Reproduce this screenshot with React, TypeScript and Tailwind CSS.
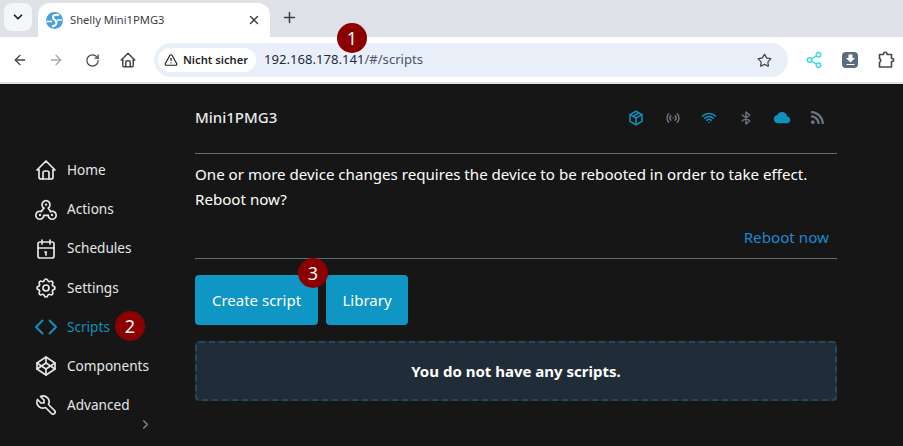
import React from 'react';
import { ArrowLeft, ArrowRight, ChevronDown, Plus, RotateCw, Share2, Star, TriangleAlert, X } from 'lucide-react';
import {
  TbAccessPoint,
  TbBluetooth,
  TbBrandCodepen,
  TbCalendar,
  TbChevronRight,
  TbCloudFilled,
  TbHome,
  TbPackage,
  TbSettings,
  TbTool,
  TbWifi,
} from 'react-icons/tb';
import { FaRss } from 'react-icons/fa';

function ActionsIcon({ className }: { className?: string }) {
  return (
    <svg width="24" height="24" viewBox="0 0 24 24" fill="none" stroke="currentColor" strokeWidth="1.7" strokeLinecap="round" strokeLinejoin="round" className={className}>
      <path d="M9.9 11.1 A4 4 0 1 1 14.1 11.1 L16.6 14.6" />
      <path d="M14.2 18.4 A4 4 0 1 0 16.6 14.6" />
      <path d="M14.2 18.4 H9.8 A4 4 0 1 1 7.4 14.6 L9.9 11.1" />
      <circle cx="12" cy="7.6" r="1.2" fill="currentColor" stroke="none" />
      <circle cx="6" cy="18" r="1.2" fill="currentColor" stroke="none" />
      <circle cx="18" cy="18" r="1.2" fill="currentColor" stroke="none" />
    </svg>
  );
}

function CodeIcon({ className }: { className?: string }) {
  return (
    <svg width="24" height="24" viewBox="0 0 24 24" fill="none" stroke="currentColor" strokeWidth="2" strokeLinecap="round" strokeLinejoin="round" className={className}>
      <path d="M8.5 5.5 L2 12 L8.5 18.5" />
      <path d="M15.5 5.5 L22 12 L15.5 18.5" />
    </svg>
  );
}

const navItems = [
  { label: 'Home', icon: TbHome },
  { label: 'Actions', icon: ActionsIcon },
  { label: 'Schedules', icon: TbCalendar },
  { label: 'Settings', icon: TbSettings },
  { label: 'Scripts', icon: CodeIcon, active: true },
  { label: 'Components', icon: TbBrandCodepen },
  { label: 'Advanced', icon: TbTool },
];

function Badge({ n, className }: { n: number; className: string }) {
  return (
    <span className={`absolute flex h-[30px] w-[30px] items-center justify-center rounded-full bg-[#8b0000] text-[18px] leading-none text-white ${className}`}>
      {n}
    </span>
  );
}

function ShellyLogo() {
  return (
    <svg width="17" height="17" viewBox="0 0 17 17" className="shrink-0">
      <circle cx="8.5" cy="8.5" r="8.5" fill="#4a9fe0" />
      <path d="M13 3 C9 2 6.5 3.5 7 6 C7.5 8 10.5 8 10.5 10.5 C10.5 12.5 8.5 14 6 14.5" fill="none" stroke="#fff" strokeWidth="2" />
      <path d="M0.5 9.5 H6" stroke="#fff" strokeWidth="1.6" />
      <path d="M11 8 H16" stroke="#fff" strokeWidth="1.4" />
    </svg>
  );
}

function ExtensionIcon() {
  return (
    <svg width="18" height="18" viewBox="0 0 18 18" fill="none" stroke="#474747" strokeWidth="1.6" strokeLinejoin="round" className="ml-[19px]">
      <path d="M2.5 3.5 H6.5 V3 a1.8 1.8 0 0 1 3.6 0 V3.5 H14.5 V7.5 H15.2 a1.5 1.5 0 0 1 0 3 H14.5 V16 H2.5 V11.5 a2.2 2.2 0 0 0 1.2-2 a2.2 2.2 0 0 0-1.2-2 Z" />
    </svg>
  );
}

function TabStrip() {
  return (
    <div className="flex h-[37px] items-end bg-[#dee1e6] pl-1">
      <div className="mb-[6px] flex h-[28px] w-[28px] items-center justify-center rounded-lg bg-[#f4f6f9]">
        <ChevronDown size={14} strokeWidth={3} className="text-[#1f1f1f]" />
      </div>
      <div className="ml-[6px] flex h-[34px] w-[232px] items-center rounded-t-xl bg-white pl-[8px] pr-[9px]">
        <ShellyLogo />
        <span className="ml-[7px] flex-1 text-[11.2px] text-[#3c4043]">Shelly Mini1PMG3</span>
        <X size={14} strokeWidth={2.5} className="text-[#3c4043]" />
      </div>
      <Plus size={17} strokeWidth={2.2} className="mb-[11px] ml-[11px] text-[#3c4043]" />
    </div>
  );
}

function Toolbar() {
  return (
    <div className="relative flex h-[47px] items-center border-b-2 border-[#e4e4e4] bg-white pt-[1px]">
      <div className="flex w-[154px] items-center pl-[12px] text-[#474747]">
        <ArrowLeft size={16} strokeWidth={2} />
        <ArrowRight size={16} strokeWidth={2} className="ml-[20px] text-[#a9a9a9]" />
        <RotateCw size={15} strokeWidth={2} className="ml-[21px]" />
        <TbHome size={18} strokeWidth={2} className="ml-[19px]" />
      </div>
      <div className="flex h-[34px] w-[634px] items-center rounded-full bg-[#e9eff9] pl-[4px] pr-[16px]">
        <div className="flex h-[24px] w-[98px] items-center gap-[5px] rounded-full bg-white pl-[6px] text-[#1f1f1f]">
          <TriangleAlert size={14} strokeWidth={2} />
          <span className="text-[11.2px] font-semibold">Nicht sicher</span>
        </div>
        <span className="ml-[8px] flex-1 text-[13.1px]">
          <span className="text-[#1f2a44]">192.168.178.141</span>
          <span className="text-[#4a5568]">/#/scripts</span>
        </span>
        <Star size={15} strokeWidth={2} className="text-[#474747]" />
      </div>
      <Share2 size={18} strokeWidth={2} className="ml-[17px] text-[#3fdcdc]" />
      <div className="ml-[19px] flex h-[16px] w-[16px] items-center justify-center rounded-[4px] bg-[#5b6b80]">
        <svg width="11" height="12" viewBox="0 0 11 12">
          <path d="M3.5 0.5 H7.5 V4 H10 L5.5 8.5 L1 4 H3.5 Z M1.5 10 H9.5 V11 H1.5 Z" fill="#fff" />
        </svg>
      </div>
      <ExtensionIcon />
      <Badge n={1} className="left-[337px] top-[-14px]" />
    </div>
  );
}

function Sidebar() {
  return (
    <aside className="relative flex w-[195px] shrink-0 flex-col pl-[34px] pt-[66.6px]">
      {navItems.map(({ label, icon: Icon, active }) => (
        <div key={label} className={`flex h-[39.2px] items-center gap-[9px] ${active ? 'text-[#1190bd]' : 'text-[#e4e6ea]'}`}>
          <Icon size={24} strokeWidth={1.7} className="shrink-0" />
          <span className="text-[13.6px]">{label}</span>
        </div>
      ))}
      <TbChevronRight size={15} className="ml-[104px] mt-[-8.4px] text-[#8a8a8a]" />
      <Badge n={2} className="left-[115px] top-[227px]" />
    </aside>
  );
}

function StatusIcons() {
  return (
    <div className="flex items-center gap-[18.6px] pr-[12px]">
      <TbPackage size={18} className="text-[#1190bd]" />
      <TbAccessPoint size={18} className="text-[#6b7280]" />
      <TbWifi size={18} className="text-[#1190bd]" />
      <TbBluetooth size={18} className="text-[#6b7280]" />
      <TbCloudFilled size={18} className="text-[#1190bd]" />
      <FaRss size={15} className="text-[#6b7280]" />
    </div>
  );
}

export default function App() {
  return (
    <div className="flex h-[446px] w-[903px] flex-col overflow-hidden bg-[#161616] font-['Noto_Sans',sans-serif]">
      <TabStrip />
      <Toolbar />
      <div className="flex flex-1">
        <Sidebar />
        <main className="w-[642px] text-white">
          <div className="flex h-[70px] items-center justify-between border-b border-[#5d6b7a] pb-[2px]">
            <span className="text-[15px] font-medium text-[#e8eaed]">Mini1PMG3</span>
            <StatusIcons />
          </div>
          <p className="pt-[8px] text-[15.12px] leading-[25px]">
            One or more device changes requires the device to be rebooted in order to take effect.
            <br />
            Reboot now?
          </p>
          <div className="flex h-[47px] items-center justify-end border-b border-[#5d6b7a] pr-[8px] pt-[5px] text-[15.2px] text-[#1e88d0]">
            Reboot now
          </div>
          <div className="relative mt-[16px] flex gap-[8px]">
            <button className="h-[50px] w-[123px] rounded-[4px] bg-[#0f96c4] text-[15px] text-white">Create script</button>
            <button className="h-[50px] w-[82px] rounded-[4px] bg-[#0f96c4] text-[15px] text-white">Library</button>
            <Badge n={3} className="left-[103px] top-[-17px]" />
          </div>
          <div className="mt-[16px] flex h-[60px] items-center justify-center rounded-[4px] border-2 border-dashed border-[#24495c] bg-[#202c37] text-[15px] font-bold text-white">
            You do not have any scripts.
          </div>
        </main>
      </div>
    </div>
  );
}
